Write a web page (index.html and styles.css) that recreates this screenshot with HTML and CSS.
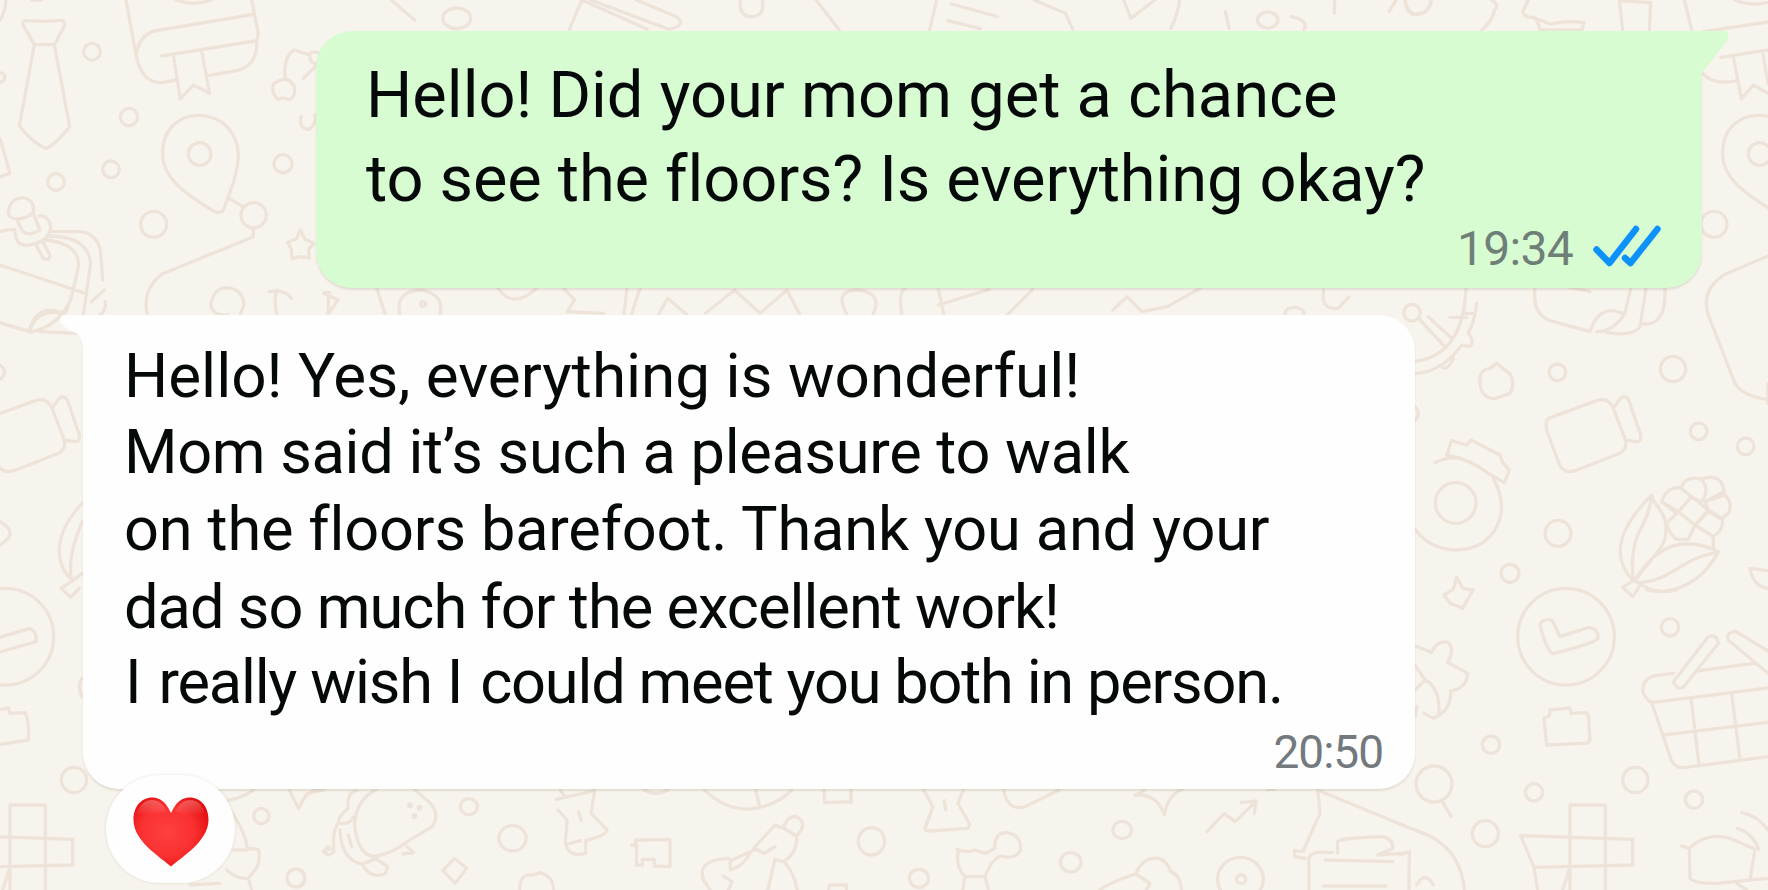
FILE: index.html
```html
<!DOCTYPE html>
<html lang="en">
<head>
  <meta charset="UTF-8">
  <title>Chat</title>
  <link rel="stylesheet" href="styles.css">
</head>
<body>
  <div class="chat">
    <svg class="doodles" viewBox="0 0 1768 890" aria-hidden="true">
      <defs>
        <g id="book">
          <path d="M378 0L408 165Q425 250 485 248L530 240M628 226L710 212Q775 195 770 122L775 100L755 0M408 165Q420 95 480 90L760 43M485 168L770 122M520 165L541 297L580 255L629 280L605 153"/>
          <path d="M528 0Q580 20 635 0"/>
        </g>
        <g id="pin">
          <path d="M488 465C485 385 540 345 598 346C665 348 715 395 715 470C712 530 690 575 670 630Q662 643 640 633C570 590 490 540 488 465Z"/>
          <circle cx="599" cy="462" r="34"/>
        </g>
        <g id="jar">
          <path d="M445 355L590 302Q625 290 640 325L675 415Q685 445 660 460L525 512Q490 523 477 490L440 390Q435 365 445 355ZM640 325L662 295Q678 282 688 305L722 405Q724 430 705 424L678 420"/>
        </g>
        <g id="cross">
          <path d="M510 900V645H616V900M362 737L698 748V825L402 832M362 737L402 832L413 900M510 832L488 900"/>
        </g>
      </defs>

      <!-- top left -->
      <g transform="scale(.33333)">
        <path d="M18 0Q15 40 0 60M95 0H125"/>
        <path d="M72 62Q65 68 72 80L103 134H163L193 78Q197 60 180 61L130 64ZM103 134L58 378Q100 430 137 445Q160 440 209 380L163 134"/>
        <circle cx="276" cy="155" r="25"/>
        <circle cx="0" cy="232" r="14"/>
        <use href="#book"/>
        <use href="#pin"/>
        <circle cx="387" cy="351" r="26"/>
        <circle cx="333" cy="508" r="25"/>
        <circle cx="168" cy="546" r="25"/>
        <circle cx="461" cy="673" r="39"/>
        <circle cx="761" cy="646" r="38"/>
        <circle cx="849" cy="491" r="27"/>
        <path d="M0 415L30 520L0 530M688 596L728 620M760 685V710L485 823Q425 870 442 945"/>
        <path d="M855 232Q850 170 882 150L925 163Q950 145 965 170Q970 190 945 200L910 235M930 170Q928 188 950 192"/>
        <path d="M852 238Q870 235 884 262Q885 295 868 299Q848 290 833 298Q810 275 822 250Q835 240 852 238Z"/>
        <path d="M903 350Q895 385 925 388Q948 380 945 345"/>
        <path d="M901 690L915 718L941 730L926 748L928 774L901 770L876 776L874 748L863 727L889 717Z"/>
        <!-- sack with knot -->
        <path d="M25 635Q30 595 70 593Q105 600 100 635Q85 655 50 657Q25 655 25 635ZM50 657L68 695Q90 710 120 690L100 640M45 690Q45 740 85 736Q150 725 152 680Q145 645 118 648M108 735L130 775Q150 785 150 765L128 725M0 695Q20 688 45 688M150 695H245Q300 705 303 770L308 840M148 708Q265 710 272 790L250 945M135 720Q240 730 235 800Q210 920 195 940M0 795L250 878M0 968L90 995M88 990Q110 910 185 938"/>
        <path d="M685 945Q640 950 632 915Q640 865 680 863Q730 868 732 915L720 945M808 875Q850 865 875 895M830 870Q820 910 832 945M275 905L312 870M300 945Q320 930 315 905M975 878H990M985 878V945"/>
      </g>

      <!-- top edge -->
      <g transform="scale(.72727 .33333)">
        <ellipse cx="628" cy="55" rx="19" ry="31"/>
        <path d="M538 0L570 60M783 88L800 0L890 88M812 0L920 88Q945 75 930 50L875 0M1018 0Q1015 50 1035 50Q1052 48 1048 0M1122 0L1154 90M1278 90L1288 0M1308 12L1372 50M1303 62L1348 86M1422 0L1465 40L1475 88M1545 0L1555 55L1588 0M1610 85Q1620 40 1622 0M1685 35L1690 85M1835 0V40M1910 35L1920 0M1932 0Q1935 45 1950 42Q1965 40 1968 0"/>
        <ellipse cx="1743" cy="60" rx="14" ry="24"/>
        <path d="M1775 50Q1800 60 1793 90"/>
      </g>

      <!-- between the bubbles -->
      <g transform="scale(.72727 .33333)">
        <path d="M445 880L465 900L450 945M518 865L530 945M550 945Q542 872 580 870Q612 885 605 945M685 865Q705 930 738 865M775 865L790 900L780 935L830 940M862 865L858 945M880 865L868 945M905 945L918 895L945 945M970 940L1010 870L1045 940L1082 870L1100 945M1165 945Q1145 870 1180 870Q1215 880 1200 945M1240 945Q1235 870 1245 865M1290 865L1298 945M1290 915L1360 868M1385 945L1420 868M1530 930L1550 890L1570 935L1605 920L1650 865M1820 870Q1815 930 1840 925L1855 890"/>
        <ellipse cx="582" cy="912" rx="4" ry="7"/>
        <ellipse cx="1780" cy="940" rx="13" ry="18"/>
      </g>

      <!-- top right -->
      <g transform="translate(1400) scale(.33333)">
        <path d="M15 0Q20 45 50 44Q90 40 93 0M275 0Q300 15 283 30Q280 60 245 90M385 0L368 35Q375 55 400 52Q415 62 420 90H545L552 68Q510 60 450 72L400 52M658 0L668 90M658 2L752 8L748 90M853 0L875 90M910 95L1104 66M962 172L1104 150M908 220Q940 255 1005 243M1000 170L1024 297L1060 255L1104 280M1088 155L1104 250M1005 0Q1050 20 1104 8"/>
        <use href="#pin" x="480"/>
        <circle cx="942" cy="673" r="39"/>
        <path d="M1104 768L975 823Q900 870 925 945L1005 1150Q1030 1190 1104 1198"/>
      </g>

      <!-- right column -->
      <g transform="translate(1400 300) scale(.33333)">
        <circle cx="36" cy="38" r="25"/>
        <path d="M45 184Q190 165 198 -35M45 220Q110 218 165 160L185 135L210 140Q225 125 205 100Q225 60 230 10M60 60L130 135M85 50L155 115M120 195Q140 220 160 175M150 52H200M195 40H225"/>
        <path d="M405 -35Q395 40 450 62L570 95Q590 30 640 32L672 40M590 95Q640 95 675 40L692 -35M620 98Q700 110 720 80L738 -35M725 72Q800 80 795 -35M500 -40L570 -25"/>
        <path d="M240 250Q235 210 270 205L290 190L310 207Q340 220 338 255Q335 285 315 285L285 296Q245 295 240 250Z"/>
        <circle cx="472" cy="217" r="25"/>
        <circle cx="819" cy="207" r="38"/>
        <use href="#jar"/>
        <circle cx="896" cy="394" r="25"/>
        <circle cx="1037" cy="439" r="25"/>
        <circle cx="474" cy="700" r="39"/>
        <circle cx="330" cy="820" r="27"/>
        <circle cx="167" cy="609" r="61"/>
        <path d="M45 320Q65 340 45 362M105 488Q140 470 180 475M280 535Q315 600 300 655Q270 750 165 750Q90 748 45 688M140 465L155 422L200 435L213 420L300 465L308 488L328 510L313 548L265 520Q205 475 140 465Z"/>
        <!-- corn -->
        <path d="M755 585C640 700 640 780 700 842M755 585C760 615 780 615 795 660C810 740 770 750 705 842M755 585Q750 640 715 700Q690 760 700 842M705 842Q800 680 955 755Q900 860 790 875Q740 870 705 842ZM720 848C820 840 850 770 950 758M700 842L668 862L698 890L718 860"/>
        <path d="M785 605Q800 560 840 563L875 590L835 635ZM845 560Q860 525 905 538Q930 570 905 605L870 590M912 535Q965 520 972 575L915 605M915 605L975 585Q1000 610 985 640L965 655L925 630ZM835 635L875 590L925 630L885 675ZM885 675L925 635L968 660Q970 690 940 710ZM800 670L835 635L885 675L865 718H830Q805 700 800 670M785 605L830 640M940 710V745"/>
        <path d="M1104 865Q1060 860 1050 805L1104 812M1104 250V310"/>
        <path d="M170 832L188 865L220 870L202 900L188 925L150 910L132 885L160 868Z"/>
      </g>

      <!-- bottom right -->
      <g transform="translate(1400 590) scale(.33333)">
        <circle cx="498" cy="140" r="145"/>
        <path d="M420 105Q425 85 455 90Q465 105 480 140L565 113Q595 115 594 145Q595 155 460 191Q440 185 420 105Z"/>
        <circle cx="810" cy="112" r="26"/>
        <circle cx="273" cy="464" r="26"/>
        <circle cx="402" cy="607" r="26"/>
        <circle cx="706" cy="570" r="38"/>
        <circle cx="882" cy="629" r="26"/>
        <circle cx="256" cy="731" r="39"/>
        <circle cx="102" cy="582" r="54"/>
        <path d="M125 632L153 678"/>
        <path d="M45 168L95 187Q110 150 145 157Q165 180 143 217L203 250Q200 295 152 303Q155 360 100 385L72 370M45 225L75 270L45 300M75 270Q120 290 117 372M45 380L50 350"/>
        <path d="M450 360L510 354L513 370L555 368Q568 372 566 390L570 450Q565 462 550 460L440 465L432 385L448 378Z"/>
        <path d="M820 250L760 258Q725 270 729 305Q735 325 755 338L1104 294M890 243L1060 220M755 338L813 508Q825 535 850 533L1104 500M790 435L1104 397M873 325L897 523M995 312L1020 508M820 275L925 140Q950 130 955 160L850 292Q830 300 820 275ZM1104 183L1005 123Q975 130 985 150L1104 250"/>
        <use href="#cross"/>
        <path d="M845 768L868 775Q920 725 990 745L1065 778L1050 870M868 775L870 865Q880 880 950 880L1104 865M1025 668Q1070 675 1104 720M1012 715Q1060 730 1076 778M1010 880L1040 900"/>
        <path d="M0 702L90 738Q185 790 193 900M0 795L28 785L27 900M50 885Q75 840 100 885"/>
        <path d="M740 0Q790 10 830 0"/>
      </g>

      <!-- left column -->
      <g transform="translate(0 300) scale(.33333)">
        <path d="M88 95Q110 25 190 40M0 68L92 96Q180 80 215 -10M120 95L230 100M0 195Q28 215 0 238M0 665Q60 700 0 735"/>
        <use href="#jar" x="-484"/>
        <path d="M247 610C160 700 160 790 218 842L247 820M247 665Q200 770 215 842M218 842L183 865L212 892L238 865"/>
      </g>
      <g transform="translate(0 590) scale(.33333)">
        <circle cx="16" cy="140" r="145"/>
        <path d="M0 142L90 115Q112 125 108 155L0 186M0 358L25 354L30 370L75 368Q88 390 85 450L0 463M245 265Q232 290 245 320"/>
        <circle cx="222" cy="570" r="38"/>
        <use href="#cross" x="-480"/>
        <circle cx="888" cy="864" r="27"/>
        <circle cx="784" cy="678" r="23"/>
        <path d="M660 635Q730 625 760 600M690 660Q735 720 742 775L775 778Q785 810 765 840L745 865L755 900M700 780H742M680 840Q710 868 745 865M570 885L660 880M868 600L895 655L920 612L970 600M985 770L970 785L985 795"/>
      </g>

      <!-- bottom edge, left half -->
      <g transform="translate(300 770) scale(.35714 .33333)">
        <path d="M0 110Q15 60 60 58M215 58Q155 90 153 165Q160 250 205 260Q260 250 300 215L370 170Q395 130 360 95L320 58M160 62Q130 65 135 115Q105 140 108 160Q90 175 95 245Q75 265 68 240L95 235M108 160Q140 165 150 140M112 180Q115 270 175 283L215 265M135 195L145 230M175 285Q200 330 240 310L245 290L215 268M300 230L318 248L288 252"/>
        <path d="M432 265L467 295L435 340L400 302ZM718 88L825 62L815 130L860 180Q860 195 800 212V250Q750 265 743 215L748 150L722 120M748 222L785 212M780 125L787 152M728 60L742 80M965 60Q995 80 1030 60M1130 58Q1190 120 1260 117Q1330 110 1378 60M1275 58L1286 105M1467 58L1469 98L1543 95V58M940 230V210L1036 209V290L992 288V268H958L960 285H942V225H928"/>
        <path d="M1352 175L1330 165L1270 235L1300 250L1330 230M1352 175Q1365 135 1390 140Q1425 160 1390 198L1352 172M1390 198Q1395 245 1355 275L1330 268L1310 360M1355 275Q1385 310 1392 360M1270 240L1205 272V300Q1240 290 1260 250M1200 265Q1110 270 1130 330L1148 360M1185 318L1210 335L1200 360M615 360Q615 310 650 315L672 308Q710 320 710 360M1480 360L1483 345H1530V360M0 300Q25 325 0 350"/>
        <circle cx="473" cy="110" r="24"/>
        <circle cx="595" cy="205" r="38"/>
        <circle cx="308" cy="106" r="4"/>
        <circle cx="335" cy="113" r="4"/>
        <circle cx="320" cy="138" r="4"/>
      </g>

      <!-- bottom edge, right half -->
      <g transform="translate(850 770) scale(.35714 .33333)">
        <path d="M3 58V98M205 58L232 110L210 175Q212 185 225 183L330 175L335 162L302 100L318 58M264 92L268 120M430 58Q440 125 490 110L585 60M798 75Q820 68 825 58M798 75Q860 70 880 135Q890 75 930 58M1000 185L1048 130L1078 155L1138 93M1095 98L1138 93L1132 130M1310 60L1568 175M1310 60L1316 130L1268 245L1245 242V260L1275 265M1168 58H1190"/>
        <path d="M300 238Q325 250 350 240L380 250L405 235Q405 185 440 188Q480 195 478 240Q465 270 420 258Q395 270 378 320H322Q295 290 303 245M322 320L316 360M378 320L388 360M700 360Q730 335 800 312Q820 260 865 265Q890 275 898 305Q925 315 928 360M800 312L840 340L830 360M1285 360V265Q1290 240 1350 248M1365 250V215Q1365 205 1490 200Q1520 205 1520 235L1478 255L1568 248M1330 270L1520 275M1325 348H1500"/>
        <ellipse cx="60" cy="214" rx="37" ry="41"/>
        <circle cx="193" cy="325" r="27"/>
        <circle cx="762" cy="180" r="26"/>
        <circle cx="618" cy="277" r="29"/>
        <ellipse cx="1093" cy="328" rx="64" ry="66"/>
        <circle cx="1095" cy="328" r="13"/>
      </g>
    </svg>

    <div class="messages">
      <div class="bubble outgoing">
        <svg class="tail" viewBox="0 0 27 42">
          <path d="M0 0H24Q28 5 25 10L0 42Z"/>
        </svg>
        <p class="line line-1">Hello! Did your mom get a chance</p>
        <p class="line line-2">to see the floors? Is everything okay?</p>
        <div class="meta">
          <span class="time">19:34</span>
          <svg class="ticks" viewBox="0 0 68 42">
            <path d="M3.500 24.500L16.500 38L43 4M32 33L37.500 38L64.500 4"/>
          </svg>
        </div>
      </div>

      <div class="bubble incoming">
        <svg class="tail" viewBox="0 0 28 34">
          <path d="M28 0H3Q-3 4 2 9Q7 15 16 18Q23 22 23 34H28Z"/>
        </svg>
        <p class="line line-3">Hello! Yes, everything is wonderful!</p>
        <p class="line line-4">Mom said it’s such a pleasure to walk</p>
        <p class="line line-5">on the floors barefoot. Thank you and your</p>
        <p class="line line-6">dad so much for the excellent work!</p>
        <p class="line line-7"><span class="wide">I</span> really wish <span class="wide">I</span> could meet you both in person.</p>
        <div class="meta">
          <span class="time">20:50</span>
        </div>
      </div>

      <div class="reaction">
        <svg class="heart" viewBox="0 0 76 70">
          <defs>
            <radialGradient id="heartFill" cx=".45" cy=".5" r=".6">
              <stop offset="0" stop-color="#ff4040"/>
              <stop offset=".6" stop-color="#f93030"/>
              <stop offset="1" stop-color="#e20f0f"/>
            </radialGradient>
            <linearGradient id="heartShine" x1="0" y1="0" x2="0" y2="1">
              <stop offset="0" stop-color="#fff" stop-opacity=".28"/>
              <stop offset="1" stop-color="#fff" stop-opacity="0"/>
            </linearGradient>
          </defs>
          <path fill="url(#heartFill)" d="M38 16C33 5 27 .5 19.500 .5C8 .5 .5 10 .5 22.500C.5 42 20 55 38 69.500C56 55 75.500 42 75.500 22.500C75.500 10 68 .5 56.500 .5C49 .5 43 5 38 16Z"/>
          <path fill="url(#heartShine)" d="M4 17Q8 3 19 3Q29 3 34 15Q20 20 4 17ZM42 15Q47 3 57 3Q68 3 72 17Q56 20 42 15Z"/>
        </svg>
      </div>
    </div>
  </div>
</body>
</html>
```
FILE: styles.css
```css
body {
  margin: 0;
  background: #f7f4ed;
  font-family: Roboto, "Liberation Sans", sans-serif;
  color: #060909;
}

.chat {
  display: grid;
  width: 1768px;
  height: 890px;
  overflow: hidden;
}

.doodles,
.messages {
  grid-area: 1 / 1;
}

.doodles {
  width: 1768px;
  height: 890px;
  fill: none;
  stroke: #eee3d9;
  stroke-width: 3.3px;
  stroke-linecap: round;
  stroke-linejoin: round;
}

.doodles path,
.doodles circle,
.doodles ellipse {
  vector-effect: non-scaling-stroke;
}

.messages {
  display: flex;
  flex-direction: column;
  align-items: flex-start;
  padding: 31px 66px 0 83px;
}

.bubble {
  position: relative;
  box-sizing: border-box;
  box-shadow: 0 2px 2px rgba(90, 70, 50, 0.13);
}

.outgoing {
  align-self: flex-end;
  width: 1386px;
  height: 257px;
  padding: 23px 41px 0 50px;
  background: #d7fcd1;
  border-radius: 36px 0 36px 36px;
}

.incoming {
  width: 1332px;
  height: 474px;
  margin-top: 27px;
  padding: 22px 32px 0 41px;
  background: #fefefe;
  border-radius: 0 36px 36px 36px;
}

.tail {
  position: absolute;
  top: 0;
}

.outgoing .tail {
  left: 100%;
  width: 27px;
  height: 42px;
  fill: #d7fcd1;
}

.incoming .tail {
  left: -23px;
  width: 28px;
  height: 34px;
  fill: #fefefe;
}

.line {
  margin: 0;
  white-space: nowrap;
}

.outgoing .line {
  font-size: 65px;
  line-height: 83.5px;
}

.incoming .line {
  font-size: 61.3px;
  line-height: 77.2px;
}

.line-2 {
  letter-spacing: -0.1px;
}

.incoming .line-3 {
  font-size: 62px;
}

.line-4 {
  letter-spacing: -0.3px;
}

.line-5 {
  letter-spacing: -0.17px;
}

.line-6 {
  letter-spacing: -0.97px;
}

.incoming .line-7 {
  margin-top: -2px;
  letter-spacing: -1.2px;
}

.wide {
  padding: 0 4px 0 1px;
}

.meta {
  display: flex;
  justify-content: flex-end;
  align-items: center;
  color: #6f7f77;
  font-size: 48px;
  line-height: 56px;
  letter-spacing: -0.7px;
}

.incoming .meta {
  margin-top: 3px;
  color: #73797d;
  font-size: 46px;
  letter-spacing: -1px;
}

.ticks {
  width: 68px;
  height: 42px;
  margin: 0 0 6px 20px;
  fill: none;
  stroke: #0d91fb;
  stroke-width: 6.5px;
  stroke-linecap: round;
  stroke-linejoin: round;
}

.reaction {
  position: relative;
  display: flex;
  justify-content: center;
  box-sizing: border-box;
  width: 129px;
  height: 108px;
  margin: -14px 0 0 23px;
  padding-top: 22px;
  background: #fefefe;
  border-radius: 54px;
  box-shadow: 0 0 3px rgba(90, 70, 50, 0.15);
}

.heart {
  width: 76px;
  height: 70px;
}
```
